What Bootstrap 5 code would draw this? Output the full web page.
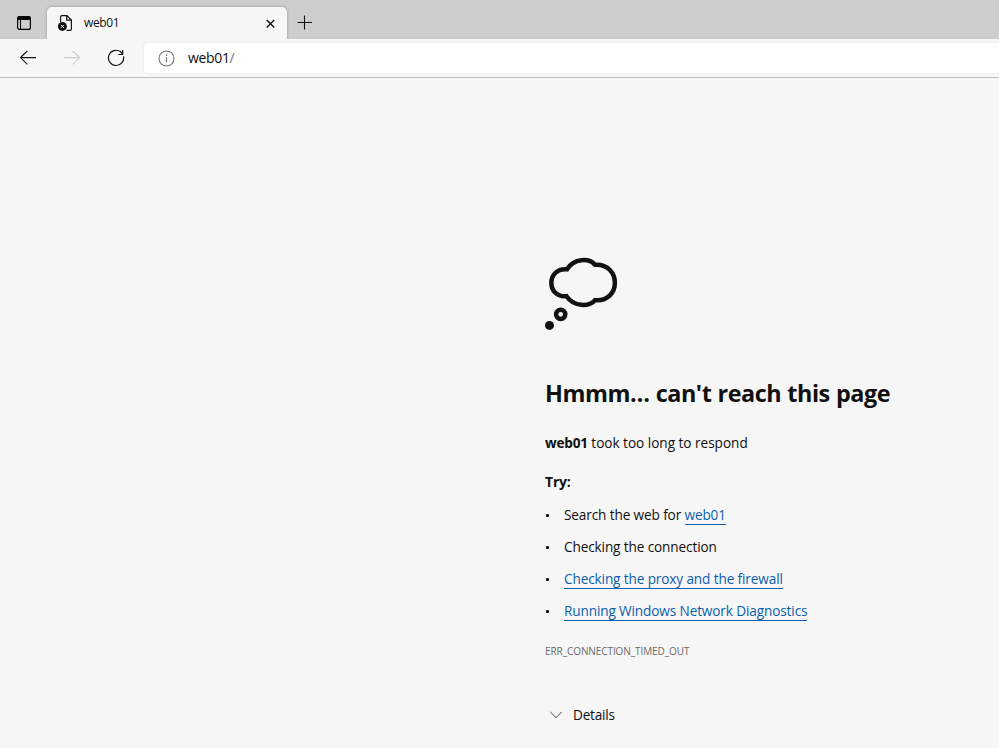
<!DOCTYPE html>
<html lang="en">
<head>
<meta charset="utf-8">
<meta name="viewport" content="width=device-width, initial-scale=1">
<title>web01</title>
<link href="https://cdn.jsdelivr.net/npm/bootstrap@5.3.0/dist/css/bootstrap.min.css" rel="stylesheet">
<style>
body{font-family:"Segoe UI","Open Sans","Noto Sans",sans-serif;font-size:13.6px;line-height:20px;color:#101010;background:#f6f6f6;height:748px;letter-spacing:-.12px}
svg{display:block;flex:none}
.tabstrip{height:39px;background:#cdcdcd;padding-left:16px}
.tab-menu{margin:15px 15px 0 0}
.browser-tab{width:240px;height:32px;margin-top:7px;padding:0 10px;background:#f7f7f7;border-radius:5px 5px 0 0;box-shadow:0 0 3px rgba(0,0,0,.3)}
.tab-title{font-size:12px;margin-left:11px;letter-spacing:-.4px}
.new-tab{margin:15px 0 0 10px}
.toolbar{height:39px;background:#f7f7f7;border-bottom:1px solid #bdbdbd;position:relative;padding-left:19px}
.nav-icons{gap:26px;margin-right:19px}
.address{height:30px;margin-top:4px;padding-left:14px;border-radius:4px 0 0 4px;background:#fff;box-shadow:0 0 3px rgba(0,0,0,.08)}
.url{margin-left:13px;font-size:14px;letter-spacing:-.35px}
.error-page{margin-left:545px;padding-top:180px}
.error-page h1{font-size:23.4px;line-height:32px;font-weight:700;margin:47px 0 24px;letter-spacing:-.45px;word-spacing:.5px}
.reason{margin-bottom:19px;letter-spacing:-.02px}
.reason strong{letter-spacing:-.2px}
.error-page h2{font-size:14px;line-height:20px;font-weight:700;margin-bottom:13px;letter-spacing:-.2px}
.tips{margin-bottom:20px}
.tips li{height:20px;margin-bottom:12px;display:flex}
.tips li:last-child{margin-bottom:0}
.tips li::before{content:"";width:3px;height:3px;border-radius:1px;background:#101010;margin:9px 15px 0 1px}
.tips a{color:#0b5fae;border-bottom:1px solid #0b5fae;text-decoration:none;line-height:19px;display:inline-block;height:20px}
.code{font-size:10px;color:#6b6b6b;margin-bottom:44px;letter-spacing:-.08px}
.details{color:#101010;font-size:13.6px;line-height:20px;padding:0 0 0 5px;border:0;letter-spacing:-.2px}
.details span{margin-left:11px}
</style>
</head>
<body class="overflow-hidden">
<header>
  <div class="tabstrip d-flex">
    <svg class="tab-menu" width="16" height="16" viewBox="0 0 16 16"><rect x="1.6" y="1.6" width="12.8" height="12.8" rx="2" fill="none" stroke="#000" stroke-width="1.2"/><path d="M1.3 5V3Q1.3 1.2 3 1.2H13Q14.7 1.2 14.7 3V5Z"/><path d="M4.5 5V14" stroke="#000"/></svg>
    <div class="browser-tab d-flex align-items-center">
      <svg width="16" height="18" viewBox="0 0 16 18"><path d="M3.6 8V3Q3.6 1.600 5 1.600H10L14.400 6V15Q14.400 16.400 13 16.400H9.500M9.700 1.800V6.200H14.200" fill="none" stroke="#111" stroke-width="1.2"/><circle cx="5.4" cy="12.4" r="4.5" fill="#111"/><path d="M3.9 10.9l3 3m0-3l-3 3" stroke="#fff"/></svg>
      <span class="tab-title flex-grow-1">web01</span>
      <svg width="13" height="13" viewBox="0 0 13 13"><path d="M2.700 2.900l7.600 7.600m0-7.600l-7.600 7.600" stroke="#111" stroke-width="1.4"/></svg>
    </div>
    <svg class="new-tab" width="16" height="16" viewBox="0 0 16 16"><path d="M.5 7.5h14.5M7.5 .5v14" stroke="#111" stroke-width="1.1"/></svg>
  </div>
  <div class="toolbar d-flex">
    <div class="nav-icons d-flex align-items-center">
      <svg width="18" height="18" viewBox="0 0 18 18" fill="none" stroke="#111" stroke-width="1.15"><path d="M17 8.6H1.5M8.3 2L1.5 8.6l6.8 6.8"/></svg>
      <svg width="18" height="18" viewBox="0 0 18 18" fill="none" stroke="#cecece" stroke-width="1.15"><path d="M1 8.6h15.5M9.7 2l6.8 6.6-6.8 6.8"/></svg>
      <svg width="18" height="18" viewBox="0 0 18 18" fill="none" stroke="#111" stroke-width="1.2"><path d="M16.5 7.3A7.6 7.6 0 1 1 13.6 2.8L15.7 5.2M15.7 1v4.5h-4.5"/></svg>
    </div>
    <div class="address d-flex align-items-center flex-grow-1">
      <svg width="17" height="17" viewBox="0 0 17 17"><circle cx="8.5" cy="8.5" r="7.5" fill="none" stroke="#767676" stroke-width="1.1"/><path d="M8.5 7.2v5M8.5 4.5v1.4" stroke="#767676" stroke-width="1.2"/></svg>
      <span class="url">web01<span class="text-secondary">/</span></span>
    </div>
  </div>
</header>
<main class="error-page">
  <svg class="overflow-visible" width="74" height="72" viewBox="0 0 74 72" fill="none" stroke="#111" stroke-width="4.5"><path d="M22 11.300C29 .2 44 -.2 50 6.800C76.500 5.200 76.500 44.500 50 42.200C44 49 29 49 21.500 38.200C1.200 40 1.200 9.500 22 11.300Z"/><circle cx="15.700" cy="56.300" r="4.600"/><circle cx="4.500" cy="67.400" r="4.500" fill="#111" stroke="none"/></svg>
  <h1>Hmmm… can't reach this page</h1>
  <p class="reason"><strong>web01</strong> took too long to respond</p>
  <h2>Try:</h2>
  <ul class="tips list-unstyled">
    <li><span>Search the web for <a href="#">web01</a></span></li>
    <li><span>Checking the connection</span></li>
    <li><a href="#">Checking the proxy and the firewall</a></li>
    <li><a href="#">Running Windows Network Diagnostics</a></li>
  </ul>
  <div class="code">ERR_CONNECTION_TIMED_OUT</div>
  <button class="details btn d-flex align-items-center" type="button">
    <svg width="12" height="12" viewBox="0 0 12 12" fill="none" stroke="#444"><path d="M.4 3l5.600 5.600L11.600 3"/></svg>
    <span>Details</span>
  </button>
</main>
<script src="https://cdn.jsdelivr.net/npm/bootstrap@5.3.0/dist/js/bootstrap.bundle.min.js"></script>
</body>
</html>
